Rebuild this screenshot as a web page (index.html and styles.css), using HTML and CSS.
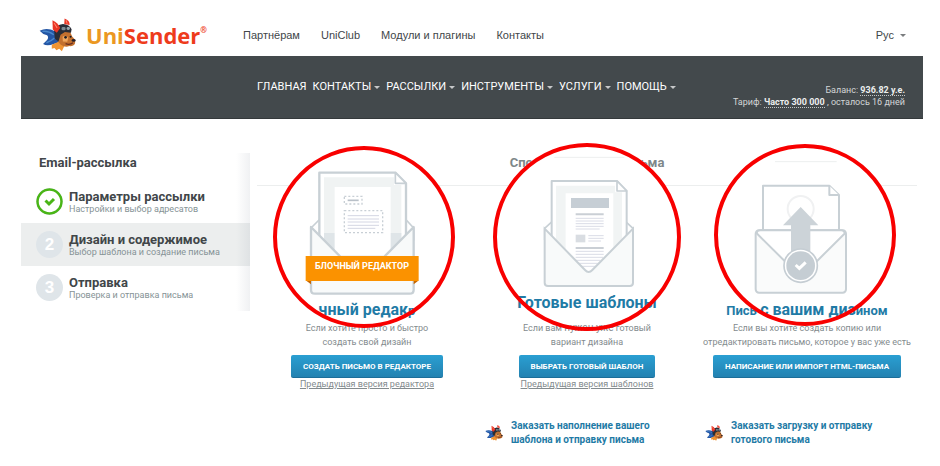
FILE: index.html
```html
<!DOCTYPE html>
<html lang="ru">
<head>
<meta charset="utf-8">
<title>UniSender</title>
<link rel="stylesheet" href="styles.css">
</head>
<body>
<svg class="defs" aria-hidden="true">
  <symbol id="mascot" viewBox="0 0 110 98">
    <path d="M2 36Q24 26 48 38L62 70 44 76Q24 83 12 76L24 64Q30 56 24 50 10 46 2 36Z" fill="#2456a5"/>
    <path d="M10 38Q28 36 44 48M22 72Q36 68 46 58" fill="none" stroke="#4a88cc" stroke-width="4"/>
    <path d="M38 78L60 68 76 80 68 97 60 90 52 94 46 88 38 90Z" fill="#f09432"/>
    <path d="M53 42Q72 28 91 36L99 54Q110 62 107 74 103 83 90 82 78 88 64 77 50 66 53 42Z" fill="#c3702e"/>
    <path d="M70 54Q80 48 87 57L84 69 71 68Z" fill="#efa65d"/>
    <path d="M45 34Q51 18 71 16 91 17 97 32L95 42 77 40 64 48 58 68 47 60Z" fill="#292d37"/>
    <path d="M40 5Q57 13 63 28L53 42 41 33Z" fill="#e93424"/>
    <path d="M76 0Q92 6 91 19L75 16Z" fill="#e93424"/>
    <path d="M45 13L54 28M80 5L84 15" stroke="#ff866e" stroke-width="3"/>
    <rect x="67" y="25" width="12" height="10" rx="4" fill="#7c8890"/>
    <rect x="82" y="25" width="10" height="9" rx="4" fill="#99a4aa"/>
    <circle cx="79" cy="56" r="4" fill="#1d1c23"/><circle cx="94" cy="54" r="3" fill="#1d1c23"/>
    <ellipse cx="103" cy="65" rx="6" ry="4" fill="#26202a"/>
    <path d="M79 75Q92 80 101 72" fill="none" stroke="#672e20" stroke-width="4"/>
  </symbol>
</svg>
<div class="page">
  <header class="top">
    <a class="logo" href="#"><svg class="logo-mascot" aria-hidden="true"><use href="#mascot"/></svg><span class="uni">Uni</span><span class="sender">Sender</span><sup>®</sup></a>
    <nav class="links"><a href="#">Партнёрам</a><a href="#">UniClub</a><a href="#">Модули и плагины</a><a href="#">Контакты</a></nav>
    <button class="lang" type="button">Рус <i class="caret"></i></button>
  </header>
  <div class="bar">
    <nav class="menu">
      <a href="#">Главная</a><a href="#">Контакты<i class="caret"></i></a><a href="#">Рассылки<i class="caret"></i></a><a href="#">Инструменты<i class="caret"></i></a><a href="#">Услуги<i class="caret"></i></a><a href="#">Помощь<i class="caret"></i></a>
    </nav>
    <div class="account">
      <div>Баланс: <a href="#">936.82 у.е.</a></div>
      <div>Тариф: <a href="#">Часто 300 000</a> , осталось 16 дней</div>
    </div>
  </div>
  <div class="body">
    <aside class="side">
      <h2 class="side-title">Email-рассылка</h2>
      <ol class="steps">
        <li class="step">
          <svg class="badge" viewBox="0 0 27 27" aria-hidden="true"><circle cx="13.5" cy="13.5" r="12" fill="#fff" stroke="#49b516" stroke-width="2.5"/><path d="M9.5 12.5L13 16L18 11" fill="none" stroke="#49b516" stroke-width="3"/></svg>
          <div><h3>Параметры рассылки</h3><p>Настройки и выбор адресатов</p></div>
        </li>
        <li class="step active">
          <span class="badge">2</span>
          <div><h3>Дизайн и содержимое</h3><p>Выбор шаблона и создание письма</p></div>
        </li>
        <li class="step">
          <span class="badge">3</span>
          <div><h3>Отправка</h3><p>Проверка и отправка письма</p></div>
        </li>
      </ol>
    </aside>
    <main class="main">
      <h1 class="title">Способ создания письма</h1>
      <div class="cards">
        <section class="card">
          <div class="lens">
            <svg viewBox="49 29 522 522" aria-hidden="true">
              <g stroke="#c8d0d5" stroke-width="7" stroke-linejoin="round">
                <path d="M151 263L178 236V300H151ZM459 263L434 236V300H459Z" fill="#fff" stroke-width="5"/>
                <path d="M176 97H404L436 129V365H176Z" fill="#fff"/>
                <path d="M190 111H400V134H422V345H190Z" fill="#f0f3f3" stroke="none"/>
                <path d="M190 278H422V345H190Z" fill="#dfe5e8" stroke="none"/>
                <path d="M222 140H390V350H222Z" fill="#fff" stroke="none"/>
                <path d="M404 97V129H436Z" fill="#fff" stroke-width="5"/>
                <path d="M151 260L240 350H370L459 260V448Q459 460 447 460H163Q151 460 151 448Z" fill="#f8fafa"/>
              </g>
              <g fill="none" stroke="#c8cfd5" stroke-width="4" stroke-dasharray="6 6"><path d="M251 168H304V191H251ZM251 211H366V277H251Z"/></g>
              <path d="M261 180H294" stroke="#b9c0c8" stroke-width="5"/>
              <path d="M261 226H355M261 236H355M261 245H355M261 255H355M261 264H344" stroke="#d4d6e3" stroke-width="3"/>
              <path d="M137 421L151 432V421ZM473 421L459 432V421Z" fill="#c76600"/>
              <path d="M135 347H474V422H135Z" fill="#fb9200"/>
            </svg>
            <span class="ribbon">Блочный редактор</span>
          </div>
          <h2><big>чный редак</big>р</h2>
          <p>Если хотите просто и быстро<br>создать свой дизайн</p>
          <button class="btn" type="button">Создать письмо в редакторе</button>
          <a class="prev" href="#">Предыдущая версия редактора</a>
        </section>
        <section class="card raised">
          <div class="lens">
            <svg viewBox="48 21 540 540" aria-hidden="true">
              <path d="M220 52H430" stroke="#edefef" stroke-width="3"/>
              <g stroke="#c8d0d5" stroke-width="6" stroke-linejoin="round">
                <path d="M191 265L213 245V300H191ZM456 265L434 245V300H456Z" fill="#fff" stroke-width="5"/>
                <path d="M212 123H408L437 153V400H212Z" fill="#fff"/>
                <path d="M225 137H402V157H423V370H225Z" fill="#f1f4f4" stroke="none"/>
                <path d="M254 160H397V400H254Z" fill="#fff" stroke="none"/>
                <path d="M408 123V153H437Z" fill="#fff" stroke-width="5"/>
              </g>
              <path d="M270 174H384V204H270Z" fill="#c6ced5"/>
              <path d="M284 223H368M284 324H368" stroke="#cacfd5" stroke-width="6"/>
              <path d="M284 235H368M284 243H368M284 251H368M284 259H368M284 267H356M322 287H368M322 295H368M322 303H360M284 334H368M284 343H368M284 352H366M284 361H358M290 370H350M298 379H342" stroke="#dadce6" stroke-width="3"/>
              <path d="M284 284H313V307H284Z" fill="#d9dde2"/>
              <path d="M191 266L312 390Q323 402 334 390L456 266V428Q456 438 446 438H201Q191 438 191 428Z" fill="#f8fafa" stroke="#c8d0d5" stroke-width="6"/>
            </svg>
          </div>
          <h2><big>Готовые шаблоны</big></h2>
          <p>Если вам <span class="near">нужен уже</span> готовый<br>вариант дизайна</p>
          <button class="btn" type="button">Выбрать готовый шаблон</button>
          <a class="prev" href="#">Предыдущая версия шаблонов</a>
          <a class="order" href="#"><svg aria-hidden="true"><use href="#mascot"/></svg><span>Заказать наполнение вашего<br>шаблона и отправку письма</span></a>
        </section>
        <section class="card">
          <div class="lens">
            <svg viewBox="54 22 522 522" aria-hidden="true">
              <path d="M225 63H410" stroke="#edefef" stroke-width="3"/>
              <g stroke="#c8d0d5" stroke-width="6" stroke-linejoin="round">
                <path d="M189 135H388L417 163V280H189Z" fill="#fff"/>
                <path d="M388 135V163H417" fill="#fff"/>
                <rect x="167" y="269" width="271" height="187" rx="10" fill="#fafbfb"/>
                <path d="M170 278L265 372H340L435 278Q432 269 424 269H180Q170 270 170 278Z" fill="#fff"/>
              </g>
              <circle cx="302" cy="205" r="39" fill="none" stroke="#f0f1f2" stroke-width="6"/>
              <path d="M302 199L355 254H331V350H273V254H249Z" fill="#ccd3d8"/>
              <circle cx="302" cy="375" r="50" fill="#fff" stroke="#c5cdd3" stroke-width="5"/>
              <circle cx="302" cy="375" r="43" fill="#c5cdd3"/>
              <path d="M287 373L298 383L317 365" fill="none" stroke="#fff" stroke-width="9"/>
            </svg>
          </div>
          <h2>Пись <big>с вашим диз</big>йном</h2>
          <p>Если вы хотите создать копию или<br>отредактировать письмо, которое у вас уже есть</p>
          <button class="btn" type="button">Написание или импорт HTML-письма</button>
          <a class="order" href="#"><svg aria-hidden="true"><use href="#mascot"/></svg><span>Заказать загрузку и отправку<br>готового письма</span></a>
        </section>
      </div>
    </main>
  </div>
</div>
</body>
</html>
```
FILE: styles.css
```css
* { box-sizing: border-box; }
body { margin: 0; background: #fff; font-family: Roboto, "Noto Sans", sans-serif; color: #414649; }
h1, h2, h3, p, ol { margin: 0; padding: 0; }
a { color: inherit; text-decoration: none; }
button { font-family: inherit; border: 0; background: none; cursor: pointer; }
.defs { display: none; }
.page { padding: 0 17px 0 21px; }

.top { display: flex; align-items: center; height: 56px; padding: 14px 17px 0 18px; font: 11px/16px "Liberation Sans", sans-serif; }
.logo { display: flex; align-items: center; width: 204px; font: bold 22px/32px "Open Sans", sans-serif; }
.logo-mascot { width: 37px; height: 34px; margin-right: 10px; }
.uni { color: #eb9822; }
.sender { color: #ee3b1c; }
.logo sup { align-self: flex-start; font-size: 8px; line-height: 24px; color: #ee3b1c; }
.links { display: flex; gap: 21px; flex: 1; }
.lang { display: flex; align-items: center; gap: 6px; padding: 0; font-family: "Liberation Sans", sans-serif; font-size: 11px; color: #414649; }
.caret { display: inline-block; border: 3px solid transparent; border-top-color: currentColor; border-bottom: 0; opacity: .7; }

.bar { display: flex; justify-content: space-between; height: 63px; padding: 0 18px 0 236px; background: #43494c; color: #fff; border-bottom: 1px solid #34393b; }
.menu { display: flex; align-items: flex-start; gap: 6px; padding-top: 21px; font-size: 11px; line-height: 20px; text-transform: uppercase; white-space: nowrap; }
.menu a { display: flex; align-items: center; gap: 3px; }
.account { padding-top: 28px; font-size: 9px; line-height: 12px; text-align: right; white-space: nowrap; color: #d3d6d7; }
.account a { font-weight: bold; color: #eceeee; border-bottom: 1px dotted #c3c6c7; }

.body { display: flex; padding-top: 34px; }
.side { width: 229px; height: 158px; background: linear-gradient(to right, transparent 94%, #f0f1f3); }
.side-title { padding: 0 18px; font-size: 13px; line-height: 20px; }
.steps { padding-top: 7px; list-style: none; }
.step { display: flex; gap: 6px; height: 43px; padding: 8px 15px; }
.active { background: linear-gradient(to right, #eceeee 94%, #dfe2e4); }
.badge { flex: none; width: 27px; height: 27px; border-radius: 50%; background: #dfe5e9; color: #fff; font: bold 17px/27px "Liberation Sans", sans-serif; text-align: center; }
.step h3 { font-size: 13px; line-height: 18px; white-space: nowrap; }
.step p { font-size: 9px; line-height: 6px; color: #869396; white-space: nowrap; }

.main { flex: 1; padding: 0 6px 0 7px; }
.title { height: 33px; border-bottom: 1px solid #eceeee; font-size: 13px; line-height: 20px; text-align: center; color: #7e8789; }
.cards { display: grid; grid-template-columns: repeat(3, 1fr); }
.card { position: relative; display: flex; flex-direction: column; align-items: center; padding-top: 114px; }
.card h2, .card p { position: relative; z-index: 1; white-space: nowrap; }
.card h2 { height: 20px; font-size: 13px; line-height: 20px; color: #1f7ba6; }
.card big { font-size: 16px; }
.card p { padding-top: 1px; font-size: 9px; line-height: 14px; text-align: center; color: #838b8e; }
.near { font-size: 10px; }
.raised { padding-top: 107px; }
.raised h2 { height: 27px; }
.btn { height: 23px; margin-top: 6px; padding: 0 12px; border-radius: 2px; border-bottom: 1px solid #1c6e99; background: linear-gradient(#2a9fd2, #2382b1); color: #fff; font-size: 8px; font-weight: bold; text-transform: uppercase; white-space: nowrap; }
.prev { font-size: 9px; line-height: 12px; text-decoration: underline; color: #838b8e; }
.order { display: flex; align-items: center; align-self: flex-start; gap: 8px; margin: auto 0 0 8px; padding-top: 29px; font-size: 10px; font-weight: bold; line-height: 14px; color: #1f7ba6; white-space: nowrap; }
.order svg { width: 18px; height: 16px; }

.lens { position: absolute; top: -40px; left: 50%; width: 182px; height: 182px; margin-left: -94px; padding: 4px; border-radius: 50%; background: #fff; text-align: center; white-space: nowrap; }
.lens::after { content: ""; position: absolute; z-index: 2; inset: 0; border: 4px solid #f80000; border-radius: 50%; }
.card:last-child .lens { top: -42px; margin-left: -93px; }
.raised .lens { top: -43px; width: 188px; height: 188px; }
.lens svg { display: block; width: 100%; height: 100%; }
.ribbon { position: absolute; top: 113px; left: 0; right: 4px; font-size: 9px; font-weight: bold; line-height: 14px; text-transform: uppercase; color: #fff; }
```
